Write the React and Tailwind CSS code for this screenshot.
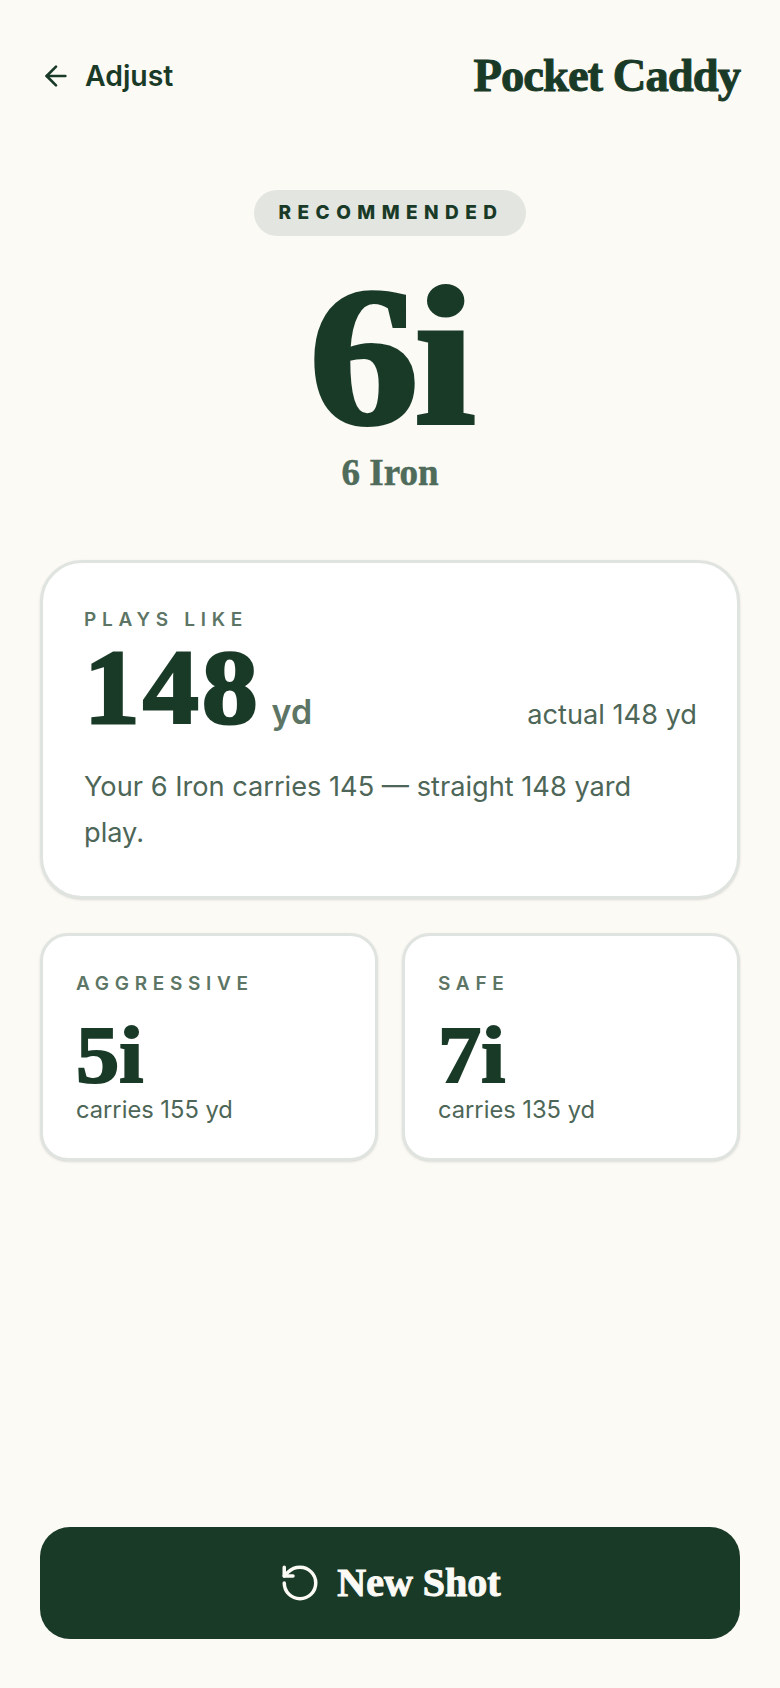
import { ArrowLeft, RotateCcw } from 'lucide-react';

const serif = "font-['Liberation_Serif',serif]";
const sans = "font-['Inter',sans-serif]";

const AltCard = ({ label, club, carry }) => (
    <div className="flex-1 h-[228px] bg-white border-[3px] border-[#e0e4e0] rounded-[28px] shadow-sm pt-[37px] pl-[33px]">
        <div className="text-[19px] leading-[22px] font-semibold tracking-[0.3em] text-[#5c7565]">{label}</div>
        <div className={`${serif} mt-[27px] text-[80px] leading-[66px] font-bold text-[#1a3a28] scale-x-[1.08] origin-left [-webkit-text-stroke:2px_currentColor]`}>{club}</div>
        <div className="mt-[8px] text-[23.7px] leading-[28px] text-[#4d6657]">{carry}</div>
    </div>
);

const App = () => {
    return (
        <div className={`${sans} w-[780px] h-[1688px] bg-[#fbfaf5] flex flex-col px-10`}>
            <div className="flex items-center justify-between h-[50px] mt-[51px]">
                <div className="flex items-center gap-[13px] text-[#1a3a28]">
                    <ArrowLeft size={32} strokeWidth={2} />
                    <span className="text-[28.4px] font-semibold">Adjust</span>
                </div>
                <div className={`${serif} text-[46.5px] font-bold tracking-[-0.02em] text-[#1a3a28] [-webkit-text-stroke:1px_currentColor]`}>Pocket Caddy</div>
            </div>

            <div className="flex flex-col items-center mt-[89px]">
                <div className="h-[46px] w-[272px] pl-[2px] rounded-full bg-[#e2e5e0] flex items-center justify-center text-[19px] font-extrabold tracking-[0.34em] text-[#1a3a28]">
                    RECOMMENDED
                </div>
                <div className={`${serif} mt-[36px] text-[198px] leading-[170px] font-bold tracking-[-0.02em] text-[#1a3a28] scale-x-[1.11] [-webkit-text-stroke:4px_currentColor]`}>6i</div>
                <div className={`${serif} mt-[11px] text-[37px] leading-[40px] font-bold text-[#4f6b5a] [-webkit-text-stroke:0.5px_currentColor]`}>6 Iron</div>
            </div>

            <div className="mt-[67px] h-[339px] bg-white border-[3px] border-[#e0e4e0] rounded-[42px] shadow-sm pt-[46px] pl-[41px] pr-[40px]">
                <div className="text-[19px] leading-[22px] font-semibold tracking-[0.3em] text-[#5c7565]">PLAYS LIKE</div>
                <div className="flex items-end justify-between mt-[14px] h-[90px]">
                    <div className="flex items-end gap-[19px]">
                        <span className={`${serif} text-[106px] leading-[94px] font-bold tracking-[0.03em] text-[#1a3a28] scale-x-[1.05] origin-left [-webkit-text-stroke:3px_currentColor]`}>148</span>
                        <span className="text-[34px] leading-[44px] mb-[1px] font-semibold text-[#5c7565]">yd</span>
                    </div>
                    <span className="text-[27.2px] leading-[36px] mb-[2px] text-[#4d6657]">actual 148 yd</span>
                </div>
                <p className="mt-[29px] text-[27.2px] leading-[46px] text-[#4d6657]">Your 6 Iron carries 145 — straight 148 yard play.</p>
            </div>

            <div className="flex gap-[24px] mt-[34px]">
                <AltCard label="AGGRESSIVE" club="5i" carry="carries 155 yd" />
                <AltCard label="SAFE" club="7i" carry="carries 135 yd" />
            </div>

            <button className="mt-auto mb-[49px] h-[112px] rounded-[30px] bg-[#1a3a28] flex items-center justify-center gap-[16px] text-[#fbfaf5]">
                <RotateCcw size={42} strokeWidth={2} />
                <span className={`${serif} text-[40px] font-bold [-webkit-text-stroke:1px_currentColor]`}>New Shot</span>
            </button>
        </div>
    );
};

export default App;
